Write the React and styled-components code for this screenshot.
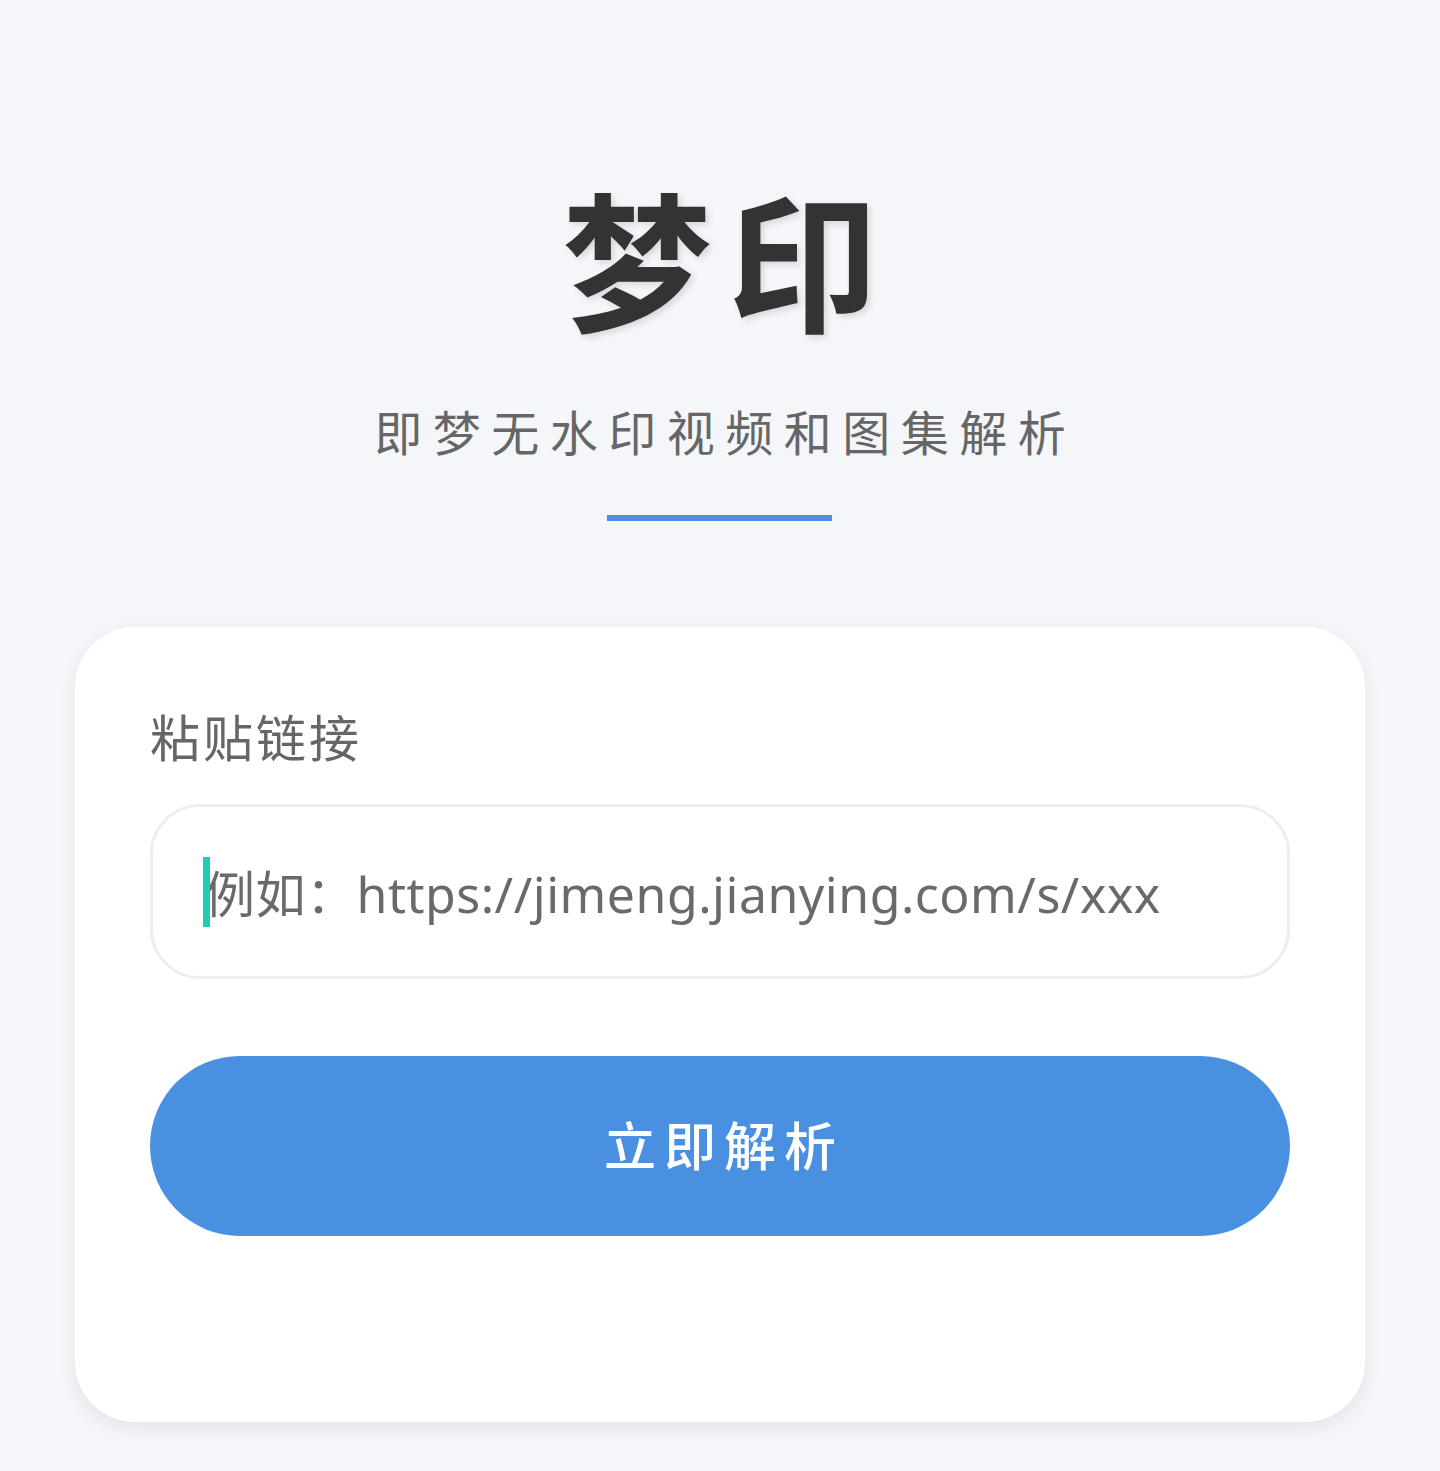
import styled, { createGlobalStyle } from 'styled-components';

const GlobalStyle = createGlobalStyle`
    html, body {
        margin: 0;
        padding: 0;
        background: #f5f6fa;
    }
    body {
        font-family: "Noto Sans", "Noto Sans CJK SC", sans-serif;
    }
`;

const Page = styled.div`
    min-height: 1471px;
    box-sizing: border-box;
    padding: 181px 75px 0;
    display: flex;
    flex-direction: column;
    align-items: center;
`;

const Header = styled.header`
    display: flex;
    flex-direction: column;
    align-items: center;
`;

const Title = styled.h1`
    margin: 0;
    font-family: "Noto Sans CJK SC", sans-serif;
    font-size: 150px;
    line-height: 150px;
    font-weight: 700;
    letter-spacing: 16px;
    text-indent: 16px;
    color: #333333;
    text-shadow: 3px 3px 6px rgba(0, 0, 0, 0.12);
`;

const Subtitle = styled.p`
    margin: 63px 0 0;
    font-family: "Noto Sans CJK SC", sans-serif;
    font-size: 48px;
    line-height: 72px;
    letter-spacing: 10.5px;
    text-indent: 10.5px;
    color: #666666;
`;

const Divider = styled.div`
    width: 225px;
    height: 6px;
    margin-top: 49px;
    background: #4a90e2;
`;

const Card = styled.section`
    align-self: stretch;
    margin-top: 106px;
    padding: 71px 75px 186px;
    background: #ffffff;
    border-radius: 60px;
    box-shadow: 0 6px 18px rgba(0, 0, 0, 0.08);
`;

const Label = styled.label`
    display: block;
    font-family: "Noto Sans CJK SC", sans-serif;
    font-size: 50px;
    line-height: 75px;
    letter-spacing: 3px;
    color: #666666;
`;

const Field = styled.div`
    position: relative;
    margin-top: 31px;
    height: 175px;
    box-sizing: border-box;
    border: 3px solid #eeeeee;
    border-radius: 50px;
    display: flex;
    align-items: center;
    padding: 0 50px;
`;

const Caret = styled.span`
    position: absolute;
    left: 50px;
    top: 50%;
    width: 7px;
    height: 70px;
    margin-top: -35px;
    background: #22cdb5;
`;

const Input = styled.input`
    flex: 1;
    border: none;
    outline: none;
    background: transparent;
    padding: 4px 0 0 2px;
    font-family: "Noto Sans", "Noto Sans CJK SC", sans-serif;
    font-size: 50px;
    letter-spacing: 0.5px;
    color: #333333;

    &::placeholder {
        color: #6a6a6a;
    }
`;

const Button = styled.button`
    display: block;
    width: 100%;
    height: 180px;
    margin-top: 77px;
    padding: 0 0 6px;
    border: none;
    border-radius: 90px;
    background: #4a90e0;
    color: #ffffff;
    font-family: "Noto Sans CJK SC", sans-serif;
    font-size: 52px;
    font-weight: 500;
    letter-spacing: 8px;
    text-indent: 8px;
    cursor: pointer;
`;

export default function App() {
    return (
        <>
            <GlobalStyle />
            <Page>
                <Header>
                    <Title>梦印</Title>
                    <Subtitle>即梦无水印视频和图集解析</Subtitle>
                    <Divider />
                </Header>
                <Card>
                    <Label htmlFor="link">粘贴链接</Label>
                    <Field>
                        <Caret />
                        <Input id="link" placeholder="例如：https://jimeng.jianying.com/s/xxx" />
                    </Field>
                    <Button>立即解析</Button>
                </Card>
            </Page>
        </>
    );
}
